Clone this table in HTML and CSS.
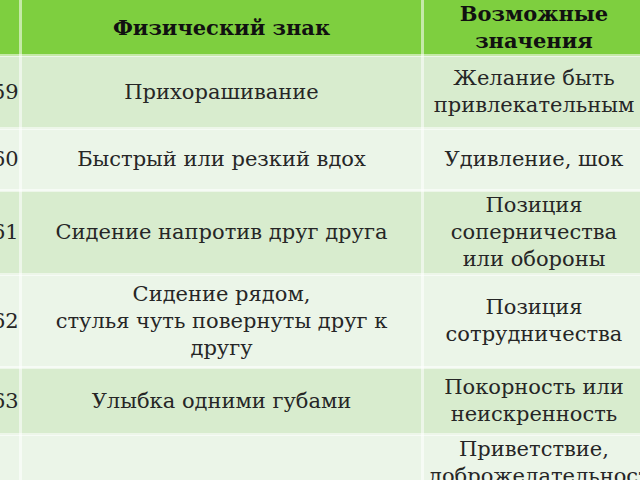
FILE: index.html
```html
<!DOCTYPE html>
<html lang="ru">
<head>
<meta charset="utf-8">
<title>Физический знак</title>
<link rel="stylesheet" href="styles.css">
</head>
<body>
<table class="signs">
  <colgroup>
    <col class="c-num">
    <col class="c-sign">
    <col class="c-mean">
  </colgroup>
  <thead>
    <tr class="h">
      <th></th>
      <th>Физический знак</th>
      <th>Возможные значения</th>
    </tr>
  </thead>
  <tbody>
    <tr class="dark r59">
      <td>59</td>
      <td>Прихорашивание</td>
      <td>Желание быть привлекательным</td>
    </tr>
    <tr class="light r60">
      <td>60</td>
      <td>Быстрый или резкий вдох</td>
      <td>Удивление, шок</td>
    </tr>
    <tr class="dark r61">
      <td>61</td>
      <td>Сидение напротив друг друга</td>
      <td>Позиция соперничества или обороны</td>
    </tr>
    <tr class="light r62">
      <td>62</td>
      <td>Сидение рядом,<br>стулья чуть повернуты друг к другу</td>
      <td>Позиция сотрудничества</td>
    </tr>
    <tr class="dark r63">
      <td>63</td>
      <td>Улыбка одними губами</td>
      <td>Покорность или неискренность</td>
    </tr>
    <tr class="light r64">
      <td>64</td>
      <td></td>
      <td class="top">Приветствие, доброжелательность</td>
    </tr>
  </tbody>
</table>
</body>
</html>
```
FILE: styles.css
```css
html, body {
  margin: 0;
  padding: 0;
  overflow: hidden;
  background: #ffffff;
}
.signs {
  margin-left: -16px;
  border-collapse: collapse;
  table-layout: fixed;
  width: 660px;
  font-family: "DejaVu Serif", "Liberation Serif", serif;
  font-size: 21px;
  line-height: 27px;
  color: #262626;
}
.c-num { width: 35px; }
.c-sign { width: 402px; }
.c-mean { width: 223px; }
.signs th,
.signs td {
  border: 3px solid rgba(255, 255, 255, 0.55);
  padding: 0 5px;
  text-align: center;
  vertical-align: middle;
  overflow: visible;
}
.signs th {
  background: #7ecf3f;
  font-weight: bold;
  color: #111111;
  line-height: 27px;
  padding: 0 4px;
}
.signs thead th { border-top: none; }
.h { height: 51px; }
.dark td { background: #d8ecce; }
.light td { background: #ebf5e8; }
.r59 { height: 73px; }
.r60 { height: 62px; }
.r61 { height: 81px; }
.r62 { height: 93px; }
.r63 { height: 67px; }
.r64 { height: 130px; }
.signs td.top { vertical-align: top; padding-top: 0; }
```
